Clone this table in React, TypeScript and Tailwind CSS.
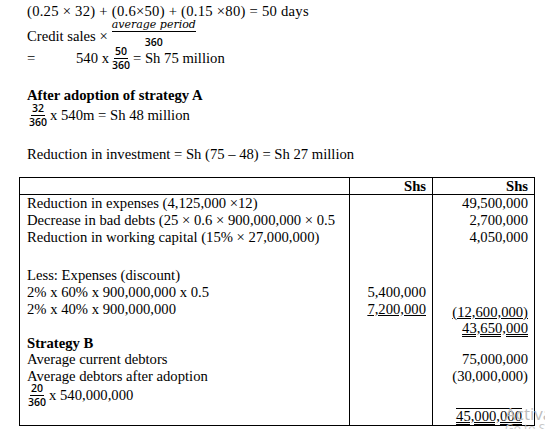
import React from "react";

function Frac({ num, den }: { num: string; den: string }) {
  return (
    <span className="inline-flex flex-col items-center align-middle mx-[2px] font-['Open_Sans',sans-serif] font-semibold text-[10.5px] leading-[11px]">
      <span className="border-b border-black px-[1px] pb-[1px]">{num}</span>
      <span className="px-[1px] pt-[1px]">{den}</span>
    </span>
  );
}

function Line({ children, className = "" }: { children?: React.ReactNode; className?: string }) {
  return <div className={"h-[16.8px] leading-[16.8px] whitespace-nowrap " + className}>{children}</div>;
}

export default function App() {
  return (
    <div className="relative w-[545px] h-[429px] overflow-hidden bg-white text-black text-[14.67px] leading-[17px] font-['Liberation_Serif',serif]">
      <div className="pl-[27px] pt-[3px]">
        <div className="h-[17px] whitespace-nowrap tracking-[0.25px]">(0.25 × 32) + (0.6×50) + (0.15 ×80) = 50 days</div>
        <div className="h-[24px] flex items-center whitespace-nowrap">
          <span className="mt-[8px]">Credit sales ×</span>
          <span className="inline-flex flex-col items-center ml-[4px] mt-[2px]">
            <span className="border-b border-black font-['DejaVu_Serif',serif] italic text-[11px] leading-[12px]">average period</span>
            <span className="font-['Open_Sans',sans-serif] font-semibold text-[10.5px] leading-[11px] pt-[5px]">360</span>
          </span>
        </div>
        <div className="h-[24px] flex items-center whitespace-nowrap mt-[2px]">
          <span className="w-[49px]">=</span>
          <span>540 x</span>
          <Frac num="50" den="360" />
          <span>= Sh 75 million</span>
        </div>
        <div className="h-[17px]" />
        <div className="font-bold h-[17px] whitespace-nowrap">After adoption of strategy A</div>
        <div className="h-[23px] flex items-center whitespace-nowrap -ml-[1px]">
          <Frac num="32" den="360" />
          <span>x 540m = Sh 48 million</span>
        </div>
        <div className="h-[19px]" />
        <div className="h-[17px] whitespace-nowrap">Reduction in investment = Sh (75 – 48) = Sh 27 million</div>
      </div>

      <div className="ml-[19px] mt-[14px] w-[516px] border border-black grid grid-cols-[330px_83px_101px]">
        <div className="border-r border-b border-black h-[17px]" />
        <div className="border-r border-b border-black h-[17px] leading-[16px] text-right pr-[6px] font-bold">Shs</div>
        <div className="border-b border-black h-[17px] leading-[16px] text-right pr-[6px] font-bold">Shs</div>

        <div className="border-r border-black pl-[7px]">
          <Line>Reduction in expenses (4,125,000 ×12)</Line>
          <Line>Decrease in bad debts (25 × 0.6 × 900,000,000 × 0.5</Line>
          <Line>Reduction in working capital (15% × 27,000,000)</Line>
          <div className="h-[22px]" />
          <Line>Less: Expenses (discount)</Line>
          <Line>2% x 60% x 900,000,000 x 0.5</Line>
          <Line>2% x 40% x 900,000,000</Line>
          <Line />
          <Line className="font-bold">Strategy B</Line>
          <Line>Average current debtors</Line>
          <Line>Average debtors after adoption</Line>
          <div className="h-[21px] flex items-center whitespace-nowrap -ml-[2px]">
            <Frac num="20" den="360" />
            <span>x 540,000,000</span>
          </div>
          <div className="h-[19px]" />
        </div>
        <div className="border-r border-black pr-[6px] text-right">
          <Line />
          <Line />
          <Line />
          <div className="h-[22px]" />
          <Line />
          <Line>5,400,000</Line>
          <Line><span className="underline">7,200,000</span></Line>
        </div>
        <div className="pr-[6px] text-right">
          <Line>49,500,000</Line>
          <Line>2,700,000</Line>
          <Line>4,050,000</Line>
          <div className="h-[22px]" />
          <Line />
          <Line />
          <Line><span className="underline relative top-[3px]">(12,600,000)</span></Line>
          <Line><span className="underline decoration-double relative top-[2px]">43,650,000</span></Line>
          <Line />
          <Line>75,000,000</Line>
          <Line>(30,000,000)</Line>
          <div className="h-[21px]" />
          <div className="h-[19px] relative">
            <span className="absolute right-[6px] top-[2px] leading-[14px] border-t border-black underline decoration-double whitespace-nowrap">45,000,000</span>
          </div>
        </div>
      </div>

      <div className="absolute left-[505px] top-[404px] text-[#bdbdbd] text-[17px] leading-[20px] whitespace-nowrap font-['Open_Sans',sans-serif] pointer-events-none">
        Activate Windows
      </div>
      <div className="absolute left-[505px] top-[422px] text-[#c8c8c8] text-[12px] leading-[14px] whitespace-nowrap font-['Open_Sans',sans-serif] pointer-events-none">
        Go to Settings
      </div>
    </div>
  );
}
